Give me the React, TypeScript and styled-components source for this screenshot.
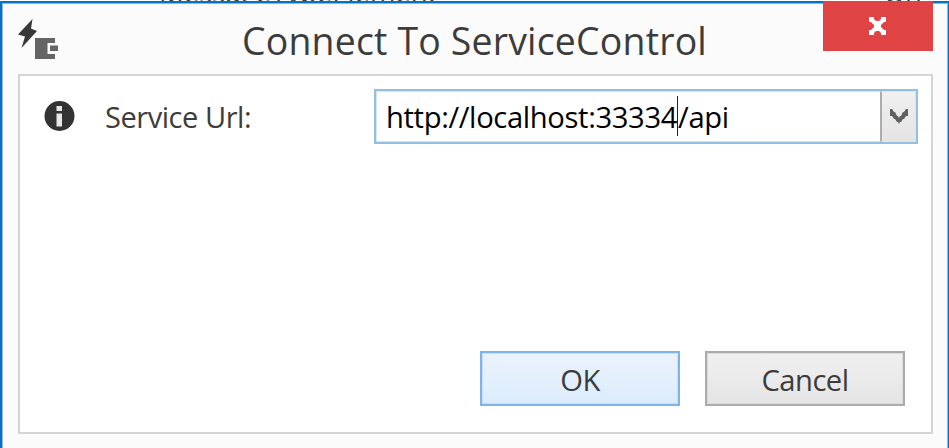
import React from "react";
import styled, { createGlobalStyle } from "styled-components";

const GlobalStyle = createGlobalStyle`
  * { box-sizing: border-box; }
  html, body { margin: 0; overflow: hidden; background: #fff; }
  body { font-family: "Open Sans", "Noto Sans", sans-serif; color: #3c3c3c; }
  button { font: inherit; color: inherit; padding: 0; border-radius: 0; }
`;

const Desktop = styled.div`
  width: 949px;
  height: 448px;
  display: flex;
  flex-direction: column;
  overflow: hidden;
`;

const Backdrop = styled.div`
  height: 1px;
  flex: none;
  display: flex;
  align-items: flex-end;
  justify-content: space-between;
  padding: 0 27px 0 159px;
  overflow: hidden;
  font-size: 27.5px;
  line-height: 17px;
  white-space: nowrap;
`;

const Window = styled.section`
  flex: 1;
  display: grid;
  grid-template-rows: 70px 360px;
  border: solid #0074cc;
  border-width: 2px 1px 0 2px;
  background: #fbfbfb;
  box-shadow: inset 1px 1px #9fb4c4, inset -1px 0 #9fb4c4;
`;

const TitleBar = styled.header`
  display: grid;
  grid-template-columns: 16px 42px 1fr 110px 15px;
  align-items: start;
`;

const AppIcon = styled.svg`
  grid-column: 2;
  width: 42px;
  height: 42px;
  margin-top: 16px;
`;

const Title = styled.h1`
  margin: 12px 0 0 182px;
  font-size: 37.4px;
  line-height: 52px;
  font-weight: 400;
  letter-spacing: 0.2px;
  white-space: nowrap;
`;

const CloseButton = styled.button`
  height: 50px;
  margin-top: -2px;
  border: 0;
  background: #e04343;
  display: flex;
  align-items: center;
  justify-content: center;
  padding-right: 1px;
`;

const Content = styled.main`
  margin: 1px 14px 0 16px;
  width: 915px;
  height: 360px;
  border: 2px solid #d5d5d5;
  background: #fff;
  display: flex;
  flex-direction: column;
  justify-content: space-between;
  padding: 13px 13px 26px 24px;
`;

const Field = styled.div`
  display: grid;
  grid-template-columns: 61px 269px 544px;
  align-items: center;
  height: 55px;
`;

const Label = styled.label`
  padding-top: 1px;
  font-size: 29px;
  line-height: 40px;
  letter-spacing: -0.45px;
  white-space: nowrap;
`;

const Combo = styled.div`
  height: 55px;
  display: flex;
  border: 2px solid #94c0e0;
  box-shadow: inset 0 0 0 1px #d3e5f2;
`;

const Value = styled.div`
  flex: 1;
  display: flex;
  align-items: center;
  padding: 1px 0 0 10px;
  color: #000;
  font-size: 29.2px;
  line-height: 40px;
  letter-spacing: -0.36px;
  white-space: nowrap;
`;

const Caret = styled.i`
  width: 1px;
  height: 40px;
  margin: 0 0 2px;
  background: #222;
`;

const DropButton = styled.button`
  width: 36px;
  border: 1px solid #e4e4e4;
  border-left: 2px solid #acacac;
  background: linear-gradient(#f0f0f0, #e4e4e4);
  display: flex;
  align-items: center;
  justify-content: center;
`;

const Actions = styled.footer`
  display: flex;
  justify-content: flex-end;
  gap: 25px;
  margin-right: 13px;
`;

const ActionButton = styled.button<{ $primary?: boolean }>`
  width: 200px;
  height: 55px;
  padding-top: 2px;
  border: 2px solid ${(p) => (p.$primary ? "#7eb4ea" : "#acacac")};
  background: ${(p) => (p.$primary ? "linear-gradient(#ebf3fc, #dcecfc)" : "linear-gradient(#f0f0f0, #e5e5e5)")};
  box-shadow: inset 0 0 0 1px ${(p) => (p.$primary ? "#c8def3" : "#dadada")};
  font-size: 29.2px;
  line-height: 40px;
  letter-spacing: -0.5px;
`;

export default function App() {
  return (
    <Desktop>
      <GlobalStyle />
      <Backdrop><span>MessageTypeElement</span><span>On</span></Backdrop>
      <Window>
        <TitleBar>
          <AppIcon viewBox="0 0 42 42">
            <path d="M14.5 0 0 15.5l7 2L3.5 29 19 12l-6-2.5Z" fill="#383838" />
            <path d="M17 19h20v5h-7.5v11H37v5H17Z M32 26.5h8v5.500h-8Z" fill="#656565" />
          </AppIcon>
          <Title>Connect To ServiceControl</Title>
          <CloseButton aria-label="Close">
            <svg width="17" height="18" viewBox="0 0 17 18">
              <path d="M0 0h5v2l2 2h3l2-2V0h5v5h-2l-3 3v2l3 3h2v5h-5v-2l-2-2H7l-2 2v2H0v-5h2l3-3V8L2 5H0Z" fill="#fff" />
            </svg>
          </CloseButton>
        </TitleBar>
        <Content>
          <Field>
            <svg width="31" height="31" viewBox="0 0 31 31">
              <circle cx="15.5" cy="15" r="15" fill="#333" />
              <path d="M12.500 5h5.500v5h-5.500Z M12.500 12.500h5.500v13h-5.500Z" fill="#e8e8e8" />
            </svg>
            <Label>Service Url:</Label>
            <Combo>
              <Value><span>http://localhost:33334</span><Caret /><span>/api</span></Value>
              <DropButton aria-label="Show recent addresses">
                <svg width="18" height="15" viewBox="0 0 18 15">
                  <path d="M0 0h2l2 3h1l2 4h1l1 2 1-2h1l2-4h1l2-3h2v7h-2l-2 3h-1l-2 3h-1l-1 2-1-2H7l-2-3H4L2 7H0Z" fill="#606060" />
                </svg>
              </DropButton>
            </Combo>
          </Field>
          <Actions>
            <ActionButton $primary>OK</ActionButton>
            <ActionButton>Cancel</ActionButton>
          </Actions>
        </Content>
      </Window>
    </Desktop>
  );
}
